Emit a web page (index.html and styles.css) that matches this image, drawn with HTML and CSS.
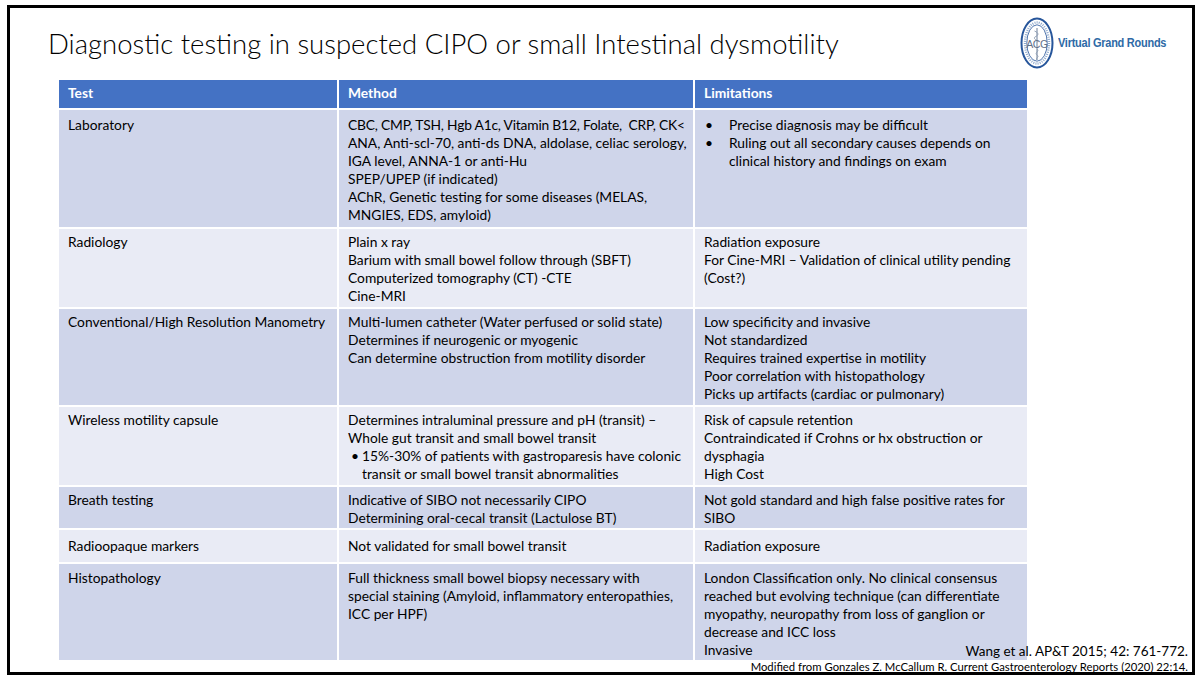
FILE: index.html
```html
<!DOCTYPE html>
<html lang="en">
<head>
<meta charset="utf-8">
<title>Diagnostic testing in suspected CIPO</title>
<link rel="stylesheet" href="styles.css">
</head>
<body>
<div class="frame">
  <header class="top">
    <h1 class="title">Diagnostic testing in suspected CIPO or small Intestinal dysmotility</h1>
    <div class="logo">
      <svg class="seal" width="34" height="52" viewBox="0 0 34 52">
        <ellipse cx="17" cy="26" rx="15.5" ry="24.5" fill="#fff" stroke="#27569b" stroke-width="2"/>
        <ellipse cx="17" cy="26" rx="12" ry="20.5" fill="none" stroke="#8fa9cc" stroke-width="2.4" stroke-dasharray="1 1.2"/>
        <ellipse cx="17" cy="26" rx="10.2" ry="18.2" fill="#fff" stroke="#27569b" stroke-width="0.8"/>
        <path d="M17 11 L17 43" stroke="#6d7f99" stroke-width="1"/>
        <path d="M14.5 14 C19 16 19 18 15 20 C12 22 20 24 17 25" fill="none" stroke="#8a9ab0" stroke-width="0.9"/>
        <path d="M17 32 C20 34 14 36 17 38 C20 40 15 41 17 43" fill="none" stroke="#8a9ab0" stroke-width="0.9"/>
        <text x="17" y="31" text-anchor="middle" class="seal-text">ACG</text>
      </svg>
      <span class="logo-name">Virtual Grand Rounds</span>
    </div>
  </header>

  <table class="grid">
    <colgroup>
      <col class="c1"><col class="c2"><col class="c3">
    </colgroup>
    <thead>
      <tr><th>Test</th><th>Method</th><th>Limitations</th></tr>
    </thead>
    <tbody>
      <tr class="dark lab">
        <td>Laboratory</td>
        <td><span class="tight">CBC, CMP, TSH, Hgb A1c, Vitamin B12, Folate,&nbsp; CRP, CK&lt;</span><br>ANA, Anti-scl-70, anti-ds DNA, aldolase, celiac serology,<br>IGA level, ANNA-1 or anti-Hu<br>SPEP/UPEP (if indicated)<br>AChR, Genetic testing for some diseases (MELAS,<br>MNGIES, EDS, amyloid)</td>
        <td>
          <ul class="bul wide">
            <li>Precise diagnosis may be difficult</li>
            <li>Ruling out all secondary causes depends on<br>clinical history and findings on exam</li>
          </ul>
        </td>
      </tr>
      <tr class="light">
        <td>Radiology</td>
        <td>Plain x ray<br>Barium with small bowel follow through (SBFT)<br>Computerized tomography (CT) -CTE<br>Cine-MRI</td>
        <td>Radiation exposure<br>For Cine-MRI – Validation of clinical utility pending<br>(Cost?)</td>
      </tr>
      <tr class="dark">
        <td>Conventional/High Resolution Manometry</td>
        <td>Multi-lumen catheter (Water perfused or solid state)<br>Determines if neurogenic or myogenic<br>Can determine obstruction from motility disorder</td>
        <td>Low specificity and invasive<br>Not standardized<br>Requires trained expertise in motility<br>Poor correlation with histopathology<br>Picks up artifacts (cardiac or pulmonary)</td>
      </tr>
      <tr class="light">
        <td>Wireless motility capsule</td>
        <td>Determines intraluminal pressure and pH (transit) –<br>Whole gut transit and small bowel transit
          <ul class="bul narrow">
            <li>15%-30% of patients with gastroparesis have colonic<br>transit or small bowel transit abnormalities</li>
          </ul>
        </td>
        <td>Risk of capsule retention<br>Contraindicated if Crohns or hx obstruction or<br>dysphagia<br>High Cost</td>
      </tr>
      <tr class="dark short">
        <td>Breath testing</td>
        <td>Indicative of SIBO not necessarily CIPO<br>Determining oral-cecal transit (Lactulose BT)</td>
        <td>Not gold standard and high false positive rates for<br>SIBO</td>
      </tr>
      <tr class="light single">
        <td>Radioopaque markers</td>
        <td>Not validated for small bowel transit</td>
        <td>Radiation exposure</td>
      </tr>
      <tr class="dark last">
        <td>Histopathology</td>
        <td>Full thickness small bowel biopsy necessary with<br>special staining (Amyloid, inflammatory enteropathies,<br>ICC per HPF)</td>
        <td>London Classification only. No clinical consensus<br>reached but evolving technique (can differentiate<br>myopathy, neuropathy from loss of ganglion or<br>decrease and ICC loss<br>Invasive</td>
      </tr>
    </tbody>
  </table>

  <div class="refs">
    <p class="ref1">Wang et al. AP&amp;T 2015; 42: 761-772.</p>
    <p class="ref2">Modified from Gonzales Z. McCallum R. Current Gastroenterology Reports (2020) 22:14.</p>
  </div>
</div>
</body>
</html>
```

FILE: styles.css
```css
* { box-sizing: border-box; }

html, body {
  margin: 0;
  padding: 0;
  background: #ffffff;
}

body {
  font-family: "Lato", "Open Sans", "DejaVu Sans", sans-serif;
  color: #000;
}

.frame {
  position: relative;
  margin: 5px 0 0 7px;
  width: 1188px;
  height: 670px;
  border: 3px solid #000;
}

.top {
  display: flex;
  justify-content: space-between;
  align-items: flex-start;
  height: 62px;
}

.title {
  margin: 19px 0 0 38px;
  font-size: 27.5px;
  line-height: 34px;
  font-weight: 300;
  color: #000;
  white-space: nowrap;
}

.logo {
  display: flex;
  align-items: center;
  gap: 4px;
  width: 146px;
  margin: 9px 26px 0 0;
}

.seal { display: block; flex: none; }

.seal-text {
  font-family: "Liberation Sans", sans-serif;
  font-size: 10.5px;
  fill: #5f6f88;
  letter-spacing: -0.4px;
}

.logo-name {
  display: inline-block;
  flex: none;
  font-family: "Liberation Sans", "Roboto", sans-serif;
  font-weight: 700;
  font-size: 12.5px;
  line-height: 16px;
  color: #2e6aa6;
  white-space: nowrap;
  letter-spacing: -0.3px;
  transform: scaleX(0.88);
  transform-origin: left center;
}

.grid {
  margin: 10px 0 0 47px;
  width: 970px;
  border-collapse: collapse;
  table-layout: fixed;
  font-size: 13.8px;
  line-height: 18px;
}

.c1 { width: 280px; }
.c2 { width: 356px; }
.c3 { width: 334px; }

.grid th,
.grid td {
  border: 2px solid #fff;
  padding: 4px 8px 2px 9px;
  text-align: left;
  vertical-align: top;
  white-space: nowrap;
}

.grid thead th {
  background: #4472c4;
  color: #fff;
  font-weight: 700;
  padding-top: 4px;
  padding-bottom: 6px;
  border-top: 0;
}

.dark td { background: #cfd5ea; }
.light td { background: #e9ebf5; }

.lab td { padding-top: 6px; padding-bottom: 3px; }
.short td { padding-bottom: 1px; }
.single td { padding-top: 7px; padding-bottom: 7px; }
.last td { padding-top: 5px; padding-bottom: 1px; }

.tight { letter-spacing: -0.2px; }

.bul {
  margin: 0;
  padding: 0;
  list-style: none;
}

.bul li { position: relative; }

.bul li::before {
  content: "•";
  position: absolute;
  left: 0;
  top: 0;
}

.bul.wide li { padding-left: 25px; }
.bul.wide li::before { left: 1px; }

.bul.narrow li { padding-left: 14px; }
.bul.narrow li::before { left: 3px; }

.refs {
  position: absolute;
  right: 4px;
  bottom: -2px;
  text-align: right;
}

.refs p {
  margin: 0;
  white-space: nowrap;
}

.ref1 {
  font-size: 13.5px;
  line-height: 17px;
}

.ref2 {
  font-size: 11.3px;
  line-height: 14px;
}
```
